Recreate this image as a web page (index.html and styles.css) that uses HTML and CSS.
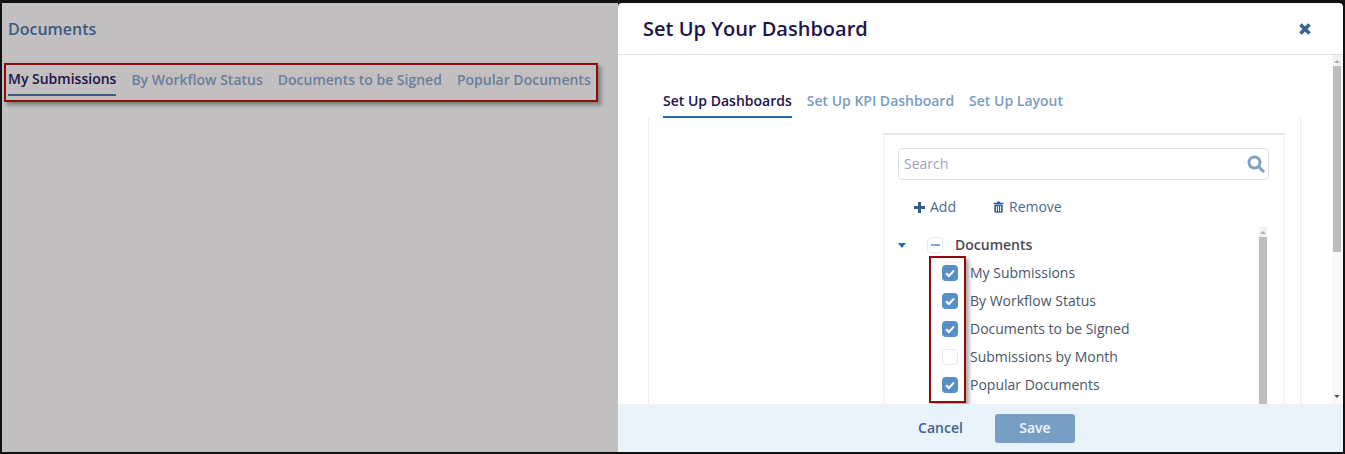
FILE: index.html
```html
<!DOCTYPE html>
<html lang="en">
<head>
<meta charset="utf-8">
<title>Set Up Your Dashboard</title>
<link rel="stylesheet" href="styles.css">
</head>
<body>
<div class="frame">
  <main class="backdrop">
    <h1 class="page-title">Documents</h1>
    <nav class="page-tabs">
      <a class="page-tab active">My Submissions</a>
      <a class="page-tab">By Workflow Status</a>
      <a class="page-tab">Documents to be Signed</a>
      <a class="page-tab">Popular Documents</a>
    </nav>
    <div class="callout callout-tabs"></div>
  </main>
  <section class="modal">
    <header class="modal-head">
      <h2 class="modal-title">Set Up Your Dashboard</h2>
      <svg class="close" viewBox="0 0 12 12" width="12" height="12"><path d="M1.5 1.5 10.5 10.5M10.5 1.5 1.5 10.5"/></svg>
    </header>
    <div class="modal-body">
      <div class="modal-content">
        <nav class="modal-tabs">
          <a class="modal-tab active">Set Up Dashboards</a>
          <a class="modal-tab">Set Up KPI Dashboard</a>
          <a class="modal-tab">Set Up Layout</a>
        </nav>
        <div class="panel">
          <div class="picker">
            <div class="search">
              <span class="search-text">Search</span>
              <svg class="search-icon" viewBox="0 0 18 18" width="18" height="18"><circle cx="7.5" cy="7.5" r="5.5"/><path d="M11.6 11.6 16.2 16.2"/></svg>
            </div>
            <div class="actions">
              <span class="action">
                <svg viewBox="0 0 11 11" width="11" height="11"><path class="fill" d="M4 0H7V4H11V7H7V11H4V7H0V4H4Z"/></svg>Add
              </span>
              <span class="action">
                <svg viewBox="0 0 11 12" width="11" height="12"><path class="fill" d="M3.6 1.8 4.3.4H6.7L7.4 1.8H10.5V3H.5V1.8ZM1.3 3.6H9.7V10.5Q9.7 11.7 8.5 11.7H2.5Q1.3 11.7 1.3 10.5ZM3 5V10.4H3.9V5ZM5 5V10.4H6V5ZM7.1 5V10.4H8V5Z" fill-rule="evenodd"/></svg>Remove
              </span>
            </div>
            <div class="tree-wrap">
              <div class="tree">
                <div class="tree-root">
                  <span class="caret"></span>
                  <span class="box partial"><i></i></span>
                  <span class="root-label">Documents</span>
                </div>
                <ul class="tree-list">
                  <li class="tree-item"><span class="box checked"><svg viewBox="0 0 16 16" width="16" height="16"><path d="M4 8.2 6.9 11 12 5.5"/></svg></span>My Submissions</li>
                  <li class="tree-item"><span class="box checked"><svg viewBox="0 0 16 16" width="16" height="16"><path d="M4 8.2 6.9 11 12 5.5"/></svg></span>By Workflow Status</li>
                  <li class="tree-item"><span class="box checked"><svg viewBox="0 0 16 16" width="16" height="16"><path d="M4 8.2 6.9 11 12 5.5"/></svg></span>Documents to be Signed</li>
                  <li class="tree-item"><span class="box"></span>Submissions by Month</li>
                  <li class="tree-item"><span class="box checked"><svg viewBox="0 0 16 16" width="16" height="16"><path d="M4 8.2 6.9 11 12 5.5"/></svg></span>Popular Documents</li>
                </ul>
                <div class="callout callout-checks"></div>
              </div>
              <div class="scrollbar inner">
                <span class="arrow up"></span><span class="thumb"></span>
              </div>
            </div>
          </div>
        </div>
      </div>
      <div class="scrollbar outer">
        <span class="arrow up"></span><span class="thumb"></span><span class="arrow down"></span>
      </div>
    </div>
    <footer class="modal-foot">
      <a class="cancel">Cancel</a>
      <button class="save" type="button">Save</button>
    </footer>
  </section>
</div>
</body>
</html>
```

FILE: styles.css
```css
* { box-sizing: border-box; }
html, body { margin: 0; padding: 0; }
body { font-family: "Open Sans", "Noto Sans", sans-serif; background: #000; overflow: hidden; }
h1, h2, ul { margin: 0; padding: 0; }
ul { list-style: none; }

.frame {
  width: 1345px;
  height: 454px;
  display: flex;
  border-style: solid;
  border-color: #111;
  border-width: 3px 2px 2px 2px;
}

/* dimmed page */
.backdrop {
  position: relative;
  flex: 0 0 616px;
  background: #c1bfbf;
  padding: 14px 0 0 6px;
}
.page-title {
  font-size: 16px;
  font-weight: 600;
  line-height: 24px;
  color: #3d5a80;
}
.page-tabs { display: flex; gap: 15px; margin-top: 24px; }
.page-tab {
  font-size: 14px;
  font-weight: 600;
  line-height: 20px;
  height: 31px;
  padding-top: 5px;
  color: #6b7f9b;
}
.page-tab.active {
  color: #1d1447;
  padding-top: 4px;
  border-bottom: 2px solid #2f5f8f;
}
.callout {
  position: absolute;
  border: 2px solid #8f0a0a;
  box-shadow: 3px 3px 4px rgba(0, 0, 0, .35);
}
.callout-tabs { left: 2px; top: 60px; width: 594px; height: 39px; }

/* dialog */
.modal {
  flex: 1;
  display: flex;
  flex-direction: column;
  min-width: 0;
  background: #fff;
  border-radius: 4px 4px 0 0;
}
.modal-head {
  flex: 0 0 52px;
  display: flex;
  align-items: center;
  justify-content: space-between;
  padding: 0 32px 0 25px;
  border-bottom: 1px solid #d8e1eb;
}
.modal-title {
  font-size: 20px;
  font-weight: 600;
  line-height: 28px;
  color: #1d1447;
}
.close { fill: none; stroke: #386494; stroke-width: 3.6; }

.modal-body { flex: 1; display: flex; min-height: 0; overflow: hidden; }
.modal-content { flex: 1; min-width: 0; padding: 32px 31px 0 30px; }
.modal-tabs { display: flex; gap: 15px; padding-left: 15px; }
.modal-tab {
  height: 31px;
  font-size: 14px;
  font-weight: 600;
  line-height: 28px;
  color: #7c9cc0;
}
.modal-tab.active { color: #1d1447; border-bottom: 2px solid #2369a8; }

.panel {
  height: 300px;
  padding: 15px 15px 0 234px;
  border-left: 1px solid #e9edf2;
  border-right: 1px solid #e9edf2;
}
.picker {
  height: 100%;
  padding: 13px 15px 0 14px;
  border-top: 2px solid #e3e7ee;
  border-left: 1px solid #eceff3;
  border-right: 1px solid #eceff3;
}
.search {
  height: 32px;
  display: flex;
  align-items: center;
  justify-content: space-between;
  padding: 0 3px 1px 5px;
  border: 1px solid #dde3ea;
  border-radius: 4px;
}
.search-text { font-size: 14px; color: #a3a3b8; }
.search-icon { fill: none; stroke: #7ea2c6; stroke-width: 3; stroke-linecap: round; }

.actions { display: flex; gap: 37px; padding: 16px 0 0 16px; }
.action {
  display: flex;
  align-items: center;
  gap: 5px;
  font-size: 14px;
  line-height: 22px;
  color: #4c6a92;
}
.fill { fill: #2f5f92; }

.tree-wrap { display: flex; justify-content: space-between; margin-top: 9px; }
.tree { position: relative; flex: 1; padding-top: 7px; }
.tree-root { display: flex; align-items: center; height: 22px; padding-bottom: 2px; }
.tree-root .box { margin-top: 2px; }
.caret {
  width: 0; height: 0;
  margin-top: 2px;
  margin-right: 21px;
  border-left: 4.5px solid transparent;
  border-right: 4.5px solid transparent;
  border-top: 5px solid #2369a8;
}
.root-label { margin-left: 12px; font-size: 14px; font-weight: 600; color: #4a4a55; }
.box {
  flex: 0 0 16px;
  width: 16px;
  height: 16px;
  display: flex;
  align-items: center;
  justify-content: center;
  border: 1px solid #e6e8ee;
  border-radius: 4px;
  background: #fff;
}
.box i { width: 9px; height: 2px; background: #7ea9d2; }
.box.checked { border: 0; background: #5590c8; }
.box.checked svg { fill: none; stroke: #fff; stroke-width: 2; }
.tree-list { padding: 3px 0 0 44px; }
.tree-item {
  display: flex;
  align-items: center;
  gap: 12px;
  height: 28px;
  padding-bottom: 2px;
  font-size: 14px;
  color: #4b5568;
}
.tree-item .box { margin-top: 2px; }
.callout-checks { left: 31px; top: 29px; width: 37px; height: 147px; }

.scrollbar {
  position: relative;
  flex: 0 0 auto;
  display: flex;
  flex-direction: column;
  align-items: center;
}
.scrollbar.outer { width: 11px; padding: 0 2px 0 1px; background: #f8f8f8; }
.scrollbar.inner { width: 8px; height: 190px; margin-right: 2px; }
.thumb { flex: 1; width: 100%; background: #bdbdbd; }
.arrow { flex: 0 0 10px; width: 100%; position: relative; background: #f1f1f1; }
.arrow::after {
  content: "";
  position: absolute;
  left: calc(50% - 3px);
  top: 4px;
  border-left: 3px solid transparent;
  border-right: 3px solid transparent;
}
.arrow.up::after { border-bottom: 3px solid #b0b0b0; }
.arrow.down::after { border-top: 3px solid #555; }
.outer .arrow.up { flex-basis: 11px; }
.outer .arrow.up::after { top: 5px; }
.outer .thumb { flex: 0 0 186px; }
.outer .arrow.down { margin-top: auto; margin-bottom: 3px; background: none; }

.modal-foot {
  flex: 0 0 48px;
  display: flex;
  align-items: center;
  justify-content: center;
  gap: 32px;
  padding: 1px 0 0 32px;
  background: #ebf3fa;
}
.cancel { font-size: 14px; font-weight: 600; color: #3d6291; margin-bottom: 2px; }
.save {
  width: 80px;
  height: 29px;
  border: 0;
  border-radius: 3px;
  padding: 0 0 2px;
  background: #789fc3;
  color: #f3f6fa;
  font: 600 14px "Open Sans", sans-serif;
}
```
